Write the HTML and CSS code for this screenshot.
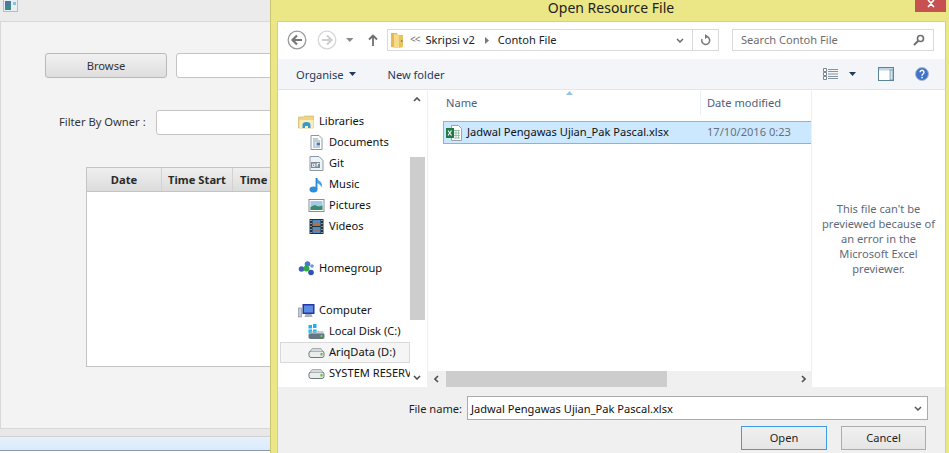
FILE: index.html
```html
<!DOCTYPE html>
<html lang="en">
<head>
    <meta charset="UTF-8">
    <meta name="viewport" content="width=device-width, initial-scale=1.0">
    <title>Open Resource File</title>
    <link rel="stylesheet" href="styles.css">
</head>
<body>
    <div class="desktop">
        <!-- app window behind the dialog -->
        <div class="app-window">
            <div class="app-title">
                <svg class="app-icon" width="15" height="13" viewBox="0 0 15 13">
                    <rect x="0.5" y="0.5" width="14" height="12" fill="#e8eef2" stroke="#b5bcc2"/>
                    <rect x="2" y="2" width="6" height="9" fill="#3f8a86"/>
                    <rect x="2" y="2" width="6" height="4" fill="#4b78a6"/>
                    <rect x="10" y="3" width="3" height="3" fill="#7fc6d8"/>
                </svg>
            </div>
            <div class="app-body">
                <div class="browse-row">
                    <button class="fx-button" type="button">Browse</button>
                    <div class="fx-input browse-input"></div>
                </div>
                <div class="filter-row">
                    <span class="filter-label">Filter By Owner :</span>
                    <div class="fx-input filter-input"></div>
                </div>
                <div class="fx-table">
                    <div class="fx-head">
                        <div class="fx-col col-date">Date</div>
                        <div class="fx-col col-start">Time Start</div>
                        <div class="fx-col col-end">Time End</div>
                    </div>
                </div>
            </div>
            <div class="app-band"></div>
            <div class="app-status"></div>
        </div>

        <!-- open file dialog -->
        <div class="dialog">
            <div class="dialog-title">
                <span class="dialog-caption">Open Resource File</span>
                <div class="close-btn">
                    <svg width="10" height="8" viewBox="0 0 10 8"><path d="M2 0l3 3 3-3M2 7l3-3 3 3" fill="none" stroke="#fff" stroke-width="1.6"/></svg>
                </div>
            </div>
            <div class="dialog-inner">
                <div class="nav-row">
                    <svg class="round-btn" width="20" height="20" viewBox="0 0 20 20">
                        <circle cx="10" cy="10" r="8.8" fill="#fff" stroke="#9a9a9a" stroke-width="1.3"/>
                        <path d="M15 10H6M10 5.500L5.500 10l4.500 4.500" fill="none" stroke="#777" stroke-width="2.2"/>
                    </svg>
                    <svg class="round-btn fwd" width="20" height="20" viewBox="0 0 20 20">
                        <circle cx="10" cy="10" r="8.8" fill="#fff" stroke="#d6d6d6" stroke-width="1.3"/>
                        <path d="M5 10h9M10 5.500l4.500 4.500-4.500 4.500" fill="none" stroke="#cfcfcf" stroke-width="2.2"/>
                    </svg>
                    <svg class="recent" width="8" height="4" viewBox="0 0 8 4"><path d="M0 0h7.500L3.800 4z" fill="#8a8a8a"/></svg>
                    <svg class="up-btn" width="10" height="12" viewBox="0 0 10 12"><path d="M5 12V2M1 5.500l4-4 4 4" fill="none" stroke="#6f6f6f" stroke-width="1.800"/></svg>
                    <div class="address">
                        <svg class="addr-folder" width="13" height="17" viewBox="0 0 13 17">
                            <path d="M0 1h6l1 2v13l-7-1z" fill="#e6b94c"/>
                            <path d="M3 2l6 1h3v12l-9 1z" fill="#f6dc8a"/>
                            <path d="M8 3l4 0v12l-4 1z" fill="#e8c25e"/>
                            <rect x="10" y="8" width="1.500" height="2" fill="#5a93c4"/>
                        </svg>
                        <span class="crumb-more">&lt;&lt;</span>
                        <span class="crumb crumb-first">Skripsi v2</span>
                        <svg class="crumb-sep" width="4" height="7" viewBox="0 0 4 7"><path d="M0 0l4 3.500L0 7z" fill="#777"/></svg>
                        <span class="crumb">Contoh File</span>
                        <svg class="addr-drop" width="8" height="5" viewBox="0 0 8 5"><path d="M1 1l3 3 3-3" fill="none" stroke="#6a6a6a" stroke-width="1.500"/></svg>
                        <div class="addr-refresh">
                            <svg width="11" height="12" viewBox="0 0 11 12"><path d="M6 2.500a4 4 0 1 1-4 2.500" fill="none" stroke="#777" stroke-width="1.500"/><path d="M5 0l3.500 2.500L5 5z" fill="#777"/></svg>
                        </div>
                    </div>
                    <div class="search">
                        <span>Search Contoh File</span>
                        <svg width="12" height="12" viewBox="0 0 12 12"><circle cx="7.500" cy="4.500" r="3" fill="none" stroke="#6d6d6d" stroke-width="1.600"/><path d="M5 7l-4 4" stroke="#6d6d6d" stroke-width="2"/></svg>
                    </div>
                </div>

                <div class="toolbar">
                    <span class="tool-item">Organise</span>
                    <svg class="tool-arrow" width="7" height="4" viewBox="0 0 7 4"><path d="M0 0h7L3.500 4z" fill="#1e3a5f"/></svg>
                    <span class="tool-item new-folder">New folder</span>
                    <div class="tool-right">
                        <svg class="view-icon" width="15" height="12" viewBox="0 0 15 12">
                            <path d="M0.500 0.500h3v3h-3zM0.500 4.500h3v3h-3zM0.500 8.500h3v3h-3z" fill="#fff" stroke="#7a8794"/>
                            <path d="M5 1.500h10M5 3.500h10M5 6h10M5 8.500h10M5 10.500h10" stroke="#8693a0"/>
                        </svg>
                        <svg class="view-arrow" width="7" height="4" viewBox="0 0 7 4"><path d="M0 0h7L3.500 4z" fill="#1e3a5f"/></svg>
                        <svg class="pane-icon" width="16" height="14" viewBox="0 0 16 14">
                            <rect x="0.500" y="0.500" width="15" height="13" fill="#fff" stroke="#5b8399"/>
                            <rect x="1" y="1" width="14" height="2.500" fill="#bcd6e6"/>
                            <rect x="12" y="3" width="3" height="10" fill="#cfe3ee" stroke="#5b8399" stroke-width="0.600"/>
                        </svg>
                        <svg class="help-icon" width="14" height="14" viewBox="0 0 14 14">
                            <circle cx="7" cy="7" r="6.500" fill="#3f74c8" stroke="#a9b8d2"/>
                            <path d="M5 5.200a2 2 0 1 1 3 1.800c-.8.500-1 .8-1 1.700" fill="none" stroke="#fff" stroke-width="1.400"/>
                            <rect x="6.300" y="9.800" width="1.500" height="1.500" fill="#fff"/>
                        </svg>
                    </div>
                </div>

                <div class="main-area">
                    <div class="nav-pane">
                        <div class="tree">
                            <div class="tree-row">
                                <svg width="16" height="14" viewBox="0 0 16 14"><path d="M0 2h5l1-1h9v12H0z" fill="#f0d486" stroke="#cfae5a" stroke-width="0.600"/><path d="M1 5h14v8H1z" fill="#fbeeb8"/><path d="M4 13v-3a4 3 0 0 1 8 0v3h-2.500v-2h-3v2z" fill="#3d97cf"/></svg>
                                <span>Libraries</span>
                            </div>
                            <div class="tree-row child">
                                <svg width="12" height="15" viewBox="0 0 12 15"><path d="M.5.500h8l3 3v11H.5z" fill="#fff" stroke="#8a97a5"/><path d="M2.500 4h5M2.500 6h7M2.500 12h7" stroke="#8a97a5"/><rect x="6" y="7.500" width="3.500" height="3" fill="#3f7fb5"/><path d="M2.500 8h2.500M2.500 10h2.500" stroke="#8a97a5"/></svg>
                                <span>Documents</span>
                            </div>
                            <div class="tree-row child">
                                <svg width="14" height="15" viewBox="0 0 14 15"><path d="M.5.500h9l4 4v10H.5z" fill="#eef3f8" stroke="#8a97a5"/><rect x="1.500" y="6" width="9" height="6" fill="#7d8a98"/><path d="M3 8h2v2.500H3zM6.500 7.500v3M8 7.500v3M7.500 7.500H10" stroke="#fff" stroke-width="0.800" fill="none"/></svg>
                                <span>Git</span>
                            </div>
                            <div class="tree-row child">
                                <svg width="14" height="16" viewBox="0 0 14 16"><path d="M7 1v11" stroke="#2d86d0" stroke-width="1.800"/><ellipse cx="4" cy="12.500" rx="4" ry="3" fill="#2d8fdc"/><path d="M7.500 1c1 3 5 3 5 7 0 1-.5 2-1 2.500.3-2.500-2-3.500-4-4.500z" fill="#4aa5e6"/></svg>
                                <span>Music</span>
                            </div>
                            <div class="tree-row child">
                                <svg width="16" height="13" viewBox="0 0 16 13"><rect x=".5" y=".5" width="15" height="12" fill="#fff" stroke="#8a8f96"/><rect x="2" y="2" width="12" height="9" fill="#9fcbe4"/><path d="M2 8l4-2 4 1.500 4-1V11H2z" fill="#3d8a6c"/></svg>
                                <span>Pictures</span>
                            </div>
                            <div class="tree-row child">
                                <svg width="14" height="15" viewBox="0 0 14 15"><rect width="14" height="15" fill="#24323a"/><rect x="3" y="1" width="8" height="6" fill="#4d8cc4"/><rect x="3" y="8" width="8" height="6" fill="#4d8cc4"/><path d="M3 6l4-3 4 3zM3 13l4-3 4 3z" fill="#b5713c"/><path d="M1 1.500h1M1 4.500h1M1 7.500h1M1 10.500h1M1 13.500h1M12 1.500h1M12 4.500h1M12 7.500h1M12 10.500h1M12 13.500h1" stroke="#e4eef2"/></svg>
                                <span>Videos</span>
                            </div>
                            <div class="tree-gap"></div>
                            <div class="tree-row">
                                <svg width="16" height="15" viewBox="0 0 16 15"><circle cx="3" cy="8" r="2.800" fill="#4060c0"/><circle cx="9" cy="3" r="2.800" fill="#4a78c8"/><circle cx="12.500" cy="11.500" r="2.800" fill="#3050b8"/><circle cx="8" cy="7.500" r="3" fill="#2fa84a"/><circle cx="13.500" cy="5" r="1.800" fill="#6d93d8"/></svg>
                                <span>Homegroup</span>
                            </div>
                            <div class="tree-gap"></div>
                            <div class="tree-row">
                                <svg width="16" height="14" viewBox="0 0 16 14"><rect x="0" y="4" width="3" height="9" fill="#c6ccd2" stroke="#7c858e" stroke-width=".6"/><rect x="4" y="0" width="12" height="10" fill="#2338a8"/><rect x="5.500" y="1.500" width="9" height="7" fill="#5c8de0"/><path d="M7 10h6l1 3H6z" fill="#aab2ba"/></svg>
                                <span>Computer</span>
                            </div>
                            <div class="tree-row child">
                                <svg width="16" height="15" viewBox="0 0 16 15"><path d="M0 1h3.500v3.500H0zM4.500 0H8v4H4.500zM0 5.500h3.500V9H0zM4.500 5.500H8V9H4.500z" fill="#19b4f0"/><rect x="0" y="9" width="16" height="6" rx="2" fill="#667784"/><rect x="1" y="7" width="14" height="3" rx="1" fill="#a9b6bf" opacity=".7"/><rect x="12" y="11" width="2" height="2" fill="#7fc64a"/></svg>
                                <span>Local Disk (C:)</span>
                            </div>
                            <div class="tree-row child current">
                                <svg width="16" height="10" viewBox="0 0 16 10"><rect x=".5" y="3" width="15" height="6.500" rx="2" fill="#e9ecec" stroke="#6e7a7a"/><path d="M2 3l1.500-2.500h9L14 3" fill="#d5d9d9" stroke="#8c9696" stroke-width=".7"/><rect x="12" y="5" width="2" height="2.500" fill="#6cb33f"/></svg>
                                <span>AriqData (D:)</span>
                            </div>
                            <div class="tree-row child">
                                <svg width="16" height="10" viewBox="0 0 16 10"><rect x=".5" y="3" width="15" height="6.500" rx="2" fill="#e9ecec" stroke="#6e7a7a"/><path d="M2 3l1.500-2.500h9L14 3" fill="#d5d9d9" stroke="#8c9696" stroke-width=".7"/><rect x="12" y="5" width="2" height="2.500" fill="#6cb33f"/></svg>
                                <span>SYSTEM RESERV</span>
                            </div>
                        </div>
                        <div class="nav-scroll">
                            <svg class="arrow-up" width="8" height="5" viewBox="0 0 8 5"><path d="M1 4l3-3 3 3" fill="none" stroke="#505050" stroke-width="1.600"/></svg>
                            <div class="nav-thumb"></div>
                            <svg class="arrow-down" width="8" height="5" viewBox="0 0 8 5"><path d="M1 1l3 3 3-3" fill="none" stroke="#505050" stroke-width="1.600"/></svg>
                        </div>
                    </div>

                    <div class="file-pane">
                        <div class="file-list">
                            <div class="list-head">
                                <span class="head-name">Name</span>
                                <svg class="sort-mark" width="7" height="4" viewBox="0 0 7 4"><path d="M3.500 0L7 4H0z" fill="#9cc3de"/></svg>
                                <span class="head-date">Date modified</span>
                            </div>
                            <div class="file-row">
                                <svg class="xls-icon" width="16" height="16" viewBox="0 0 16 16">
                                    <path d="M5.500.5h7l3 3v12h-10z" fill="#fff" stroke="#9aa3a8"/>
                                    <path d="M8 5.500h6M8 8h6M8 10.500h6M8 13h6M10 5v8.500M12.500 5v8.500" stroke="#7fb08e" stroke-width=".7"/>
                                    <rect x="0" y="3" width="8" height="10" fill="#1f7a45"/>
                                    <path d="M2 5.500l3.500 5M5.500 5.500l-3.500 5" stroke="#fff" stroke-width="1.100"/>
                                </svg>
                                <span class="file-name">Jadwal Pengawas Ujian_Pak Pascal.xlsx</span>
                                <span class="file-date">17/10/2016 0:23</span>
                            </div>
                        </div>
                        <div class="h-scroll">
                            <svg width="5" height="8" viewBox="0 0 5 8"><path d="M4 1L1 4l3 3" fill="none" stroke="#505050" stroke-width="1.600"/></svg>
                            <div class="h-track"><div class="h-thumb"></div></div>
                            <svg width="5" height="8" viewBox="0 0 5 8"><path d="M1 1l3 3-3 3" fill="none" stroke="#505050" stroke-width="1.600"/></svg>
                        </div>
                    </div>

                    <div class="preview">This file can't be previewed because of an error in the Microsoft Excel previewer.</div>
                </div>

                <div class="footer">
                    <div class="name-row">
                        <span class="name-label">File name:</span>
                        <div class="name-input">
                            <span>Jadwal Pengawas Ujian_Pak Pascal.xlsx</span>
                            <svg width="8" height="5" viewBox="0 0 8 5"><path d="M1 1l3 3 3-3" fill="none" stroke="#555" stroke-width="1.500"/></svg>
                        </div>
                    </div>
                    <div class="button-row">
                        <button class="win-btn default" type="button">Open</button>
                        <button class="win-btn" type="button">Cancel</button>
                    </div>
                </div>
            </div>
        </div>
    </div>
</body>
</html>
```

FILE: styles.css
```css
html, body {
    margin: 0;
    padding: 0;
}
body {
    font-family: "Noto Sans", Arial, sans-serif;
    font-size: 11.1px;
    background: #fff;
    color: #1e1e1e;
}
.desktop {
    position: relative;
    width: 949px;
    height: 453px;
    overflow: hidden;
}

/* back window */
.app-window {
    position: absolute;
    left: 0;
    top: 0;
    width: 290px;
    height: 451px;
    display: flex;
    flex-direction: column;
    background: #ebebeb;
}
.app-title {
    height: 21px;
    padding-left: 3px;
    box-sizing: border-box;
}
.app-icon {
    display: block;
    margin-top: -1px;
}
.app-body {
    height: 408px;
    box-sizing: border-box;
    background: #f3f3f3;
    border: 1px solid #d8d8d8;
    border-right: 0;
    padding: 31px 0 0 44px;
    font-size: 11.2px;
}
.browse-row {
    display: flex;
    gap: 9px;
}
.fx-button {
    width: 122px;
    height: 25px;
    flex: none;
    padding: 0;
    font: inherit;
    color: #333;
    background: linear-gradient(#f1f1f1, #dedede);
    border: 1px solid #b9b9b9;
    border-radius: 3px;
}
.fx-input {
    height: 25px;
    flex: none;
    box-sizing: border-box;
    background: #fff;
    border: 1px solid #c4c4c4;
    border-radius: 3px;
}
.browse-input {
    width: 120px;
}
.filter-row {
    display: flex;
    align-items: center;
    margin-top: 32px;
    margin-left: 14px;
    gap: 10px;
}
.filter-label {
    width: 87px;
    flex: none;
    padding-bottom: 2px;
    color: #333;
    white-space: nowrap;
}
.filter-input {
    width: 140px;
}
.fx-table {
    width: 230px;
    height: 200px;
    box-sizing: border-box;
    margin: 32px 0 0 41px;
    background: #fff;
    border: 1px solid #c4c4c4;
}
.fx-head {
    display: flex;
    height: 24px;
    box-sizing: border-box;
    border-bottom: 1px solid #c4c4c4;
    background: linear-gradient(#efefef, #dcdcdc);
}
.fx-col {
    box-sizing: border-box;
    border-right: 1px solid #d2d2d2;
    text-align: center;
    font-weight: bold;
    line-height: 23px;
    color: #2b2b2b;
    white-space: nowrap;
}
.col-date { width: 75px; }
.col-start { width: 71px; }
.col-end { width: 80px; padding-left: 7px; text-align: left; }
.app-band {
    height: 7px;
    background: #e8e8e8;
    border-bottom: 1px solid #d2d2d2;
}
.app-status {
    flex: 1;
    background: linear-gradient(#e3f0fd, #dcebfb);
    border-bottom: 1px solid #8f98a8;
}

/* dialog */
.dialog {
    position: absolute;
    left: 270px;
    top: 0;
    width: 679px;
    height: 453px;
    box-sizing: border-box;
    display: flex;
    flex-direction: column;
    background: #ebe686;
    border-left: 1px solid #c9c56c;
}
.dialog-title {
    position: relative;
    height: 22px;
    flex: none;
    text-align: center;
}
.dialog-caption {
    display: block;
    padding-left: 2px;
    font-size: 14px;
    line-height: 15px;
    color: #222;
}
.close-btn {
    position: absolute;
    right: 3px;
    top: 0;
    width: 31px;
    height: 12px;
    background: #c75050;
    text-align: center;
    line-height: 6px;
}
.dialog-inner {
    flex: 1;
    margin: 0 4px 0 7px;
    display: flex;
    flex-direction: column;
    background: #fff;
    box-shadow: 0 0 0 1px #d4d08a;
    min-height: 0;
}
.nav-row {
    height: 37px;
    flex: none;
    display: flex;
    align-items: center;
    padding: 0 0 1px 9px;
    box-sizing: border-box;
}
.round-btn {
    flex: none;
}
.fwd {
    margin-left: 10px;
}
.recent {
    margin-left: 9px;
}
.up-btn {
    margin-left: 14px;
}
.address {
    width: 332px;
    height: 22px;
    margin-left: 9px;
    box-sizing: border-box;
    border: 1px solid #d9d9d9;
    display: flex;
    align-items: center;
    color: #222;
}
.address span, .search span {
    padding-bottom: 2px;
}
.addr-folder {
    margin-left: 3px;
}
.crumb-more {
    margin-left: 6px;
    color: #777;
    font-size: 10px;
    letter-spacing: -1px;
}
.crumb {
    margin-left: 9px;
}
.crumb-first {
    margin-left: 6px;
}
.crumb-sep {
    margin-left: 10px;
}
.addr-drop {
    margin-left: auto;
    margin-right: 8px;
}
.addr-refresh {
    width: 25px;
    height: 100%;
    border-left: 1px solid #d9d9d9;
    display: flex;
    align-items: center;
    justify-content: center;
}
.search {
    width: 202px;
    height: 22px;
    margin-left: 13px;
    box-sizing: border-box;
    border: 1px solid #d9d9d9;
    display: flex;
    align-items: center;
    justify-content: space-between;
    padding: 0 8px;
    color: #6d6d6d;
}
.toolbar {
    height: 31px;
    flex: none;
    box-sizing: border-box;
    background: #f3f5f8;
    border-bottom: 1px solid #e3e5e8;
    display: flex;
    align-items: center;
    padding-left: 18px;
}
.tool-item {
    color: #1e3a5f;
}
.tool-arrow {
    margin-left: 6px;
}
.new-folder {
    margin-left: 31px;
}
.tool-right {
    margin-left: auto;
    display: flex;
    align-items: center;
}
.view-arrow {
    margin-left: 11px;
}
.pane-icon {
    margin-left: 22px;
}
.help-icon {
    margin-left: 21px;
    margin-right: 16px;
}
.main-area {
    height: 297px;
    flex: none;
    display: flex;
    background: #fff;
}

/* nav tree */
.nav-pane {
    width: 150px;
    flex: none;
    display: flex;
    border-right: 1px solid #f0f0f0;
    box-sizing: border-box;
    overflow: hidden;
}
.tree {
    width: 132px;
    flex: none;
    padding-top: 21px;
    box-sizing: border-box;
    overflow: hidden;
}
.tree-row {
    height: 21px;
    display: flex;
    align-items: center;
    padding-left: 20px;
    white-space: nowrap;
    color: #111;
}
.tree-row span {
    padding-bottom: 2px;
}
.tree-row svg {
    width: 17px;
    flex: none;
    margin-right: 4px;
}
.tree-row.child {
    padding-left: 30px;
}
.tree-gap {
    height: 21px;
}
.tree-row.current {
    box-shadow: inset 0 0 0 1px #d9d9d9;
    background: #f5f5f5;
    margin-left: 2px;
    padding-left: 28px;
}
.nav-scroll {
    position: relative;
    width: 15px;
    flex: none;
}
.nav-thumb {
    position: absolute;
    left: 0;
    top: 67px;
    width: 15px;
    height: 163px;
    background: #cdcdcd;
}
.arrow-up {
    position: absolute;
    left: 3px;
    top: 7px;
}
.arrow-down {
    position: absolute;
    left: 3px;
    bottom: 7px;
}

/* file list */
.file-pane {
    width: 384px;
    flex: none;
    display: flex;
    flex-direction: column;
    border-right: 1px solid #efefef;
    box-sizing: border-box;
}
.file-list {
    flex: 1;
    padding-left: 15px;
}
.list-head {
    position: relative;
    height: 25px;
    margin-bottom: 6px;
    color: #4c607a;
    display: flex;
    align-items: center;
    padding-left: 3px;
}
.sort-mark {
    position: absolute;
    left: 123px;
    top: 1px;
}
.head-date {
    position: absolute;
    left: 257px;
    padding-left: 6px;
    line-height: 24px;
    border-left: 1px solid #e9eef3;
}
.file-row {
    height: 23px;
    box-sizing: border-box;
    display: flex;
    align-items: center;
    background: #cce8ff;
    border: 1px solid #7db7e8;
    border-right: 0;
    position: relative;
}
.file-row span {
    padding-bottom: 2px;
}
.xls-icon {
    margin-left: 2px;
    flex: none;
}
.file-name {
    margin-left: 5px;
    color: #111;
    white-space: nowrap;
}
.file-date {
    position: absolute;
    left: 263px;
    color: #66707e;
    white-space: nowrap;
}
.h-scroll {
    height: 16px;
    flex: none;
    display: flex;
    align-items: center;
    background: #f0f0f0;
    padding: 0 5px 0 6px;
    box-sizing: border-box;
    justify-content: space-between;
}
.h-track {
    flex: 1;
    height: 100%;
    margin: 0 0 0 7px;
}
.h-thumb {
    width: 221px;
    height: 100%;
    background: #cdcdcd;
}
.preview {
    width: 133px;
    flex: none;
    box-sizing: border-box;
    padding: 111px 6px 0;
    text-align: center;
    color: #5f6b7a;
    line-height: 15px;
}

/* footer */
.footer {
    flex: 1;
    background: #f0f0f0;
    display: flex;
    flex-direction: column;
    padding: 9px 17px 0 0;
    box-sizing: border-box;
}
.name-row {
    display: flex;
    align-items: center;
    justify-content: flex-end;
    gap: 5px;
}
.name-label {
    color: #1e1e1e;
}
.name-input {
    width: 461px;
    height: 24px;
    box-sizing: border-box;
    background: #fff;
    border: 1px solid #ababab;
    display: flex;
    align-items: center;
    justify-content: space-between;
    padding: 0 5px 0 3px;
    color: #111;
}
.button-row {
    display: flex;
    justify-content: flex-end;
    gap: 14px;
    margin-top: 6px;
    padding-right: 2px;
}
.win-btn {
    width: 85px;
    height: 24px;
    padding: 0 0 2px;
    font: inherit;
    color: #1e1e1e;
    background: linear-gradient(#f0f0f0, #e5e5e5);
    border: 1px solid #acacac;
}
.win-btn.default {
    width: 86px;
    border-color: #3d9be9;
}
```
